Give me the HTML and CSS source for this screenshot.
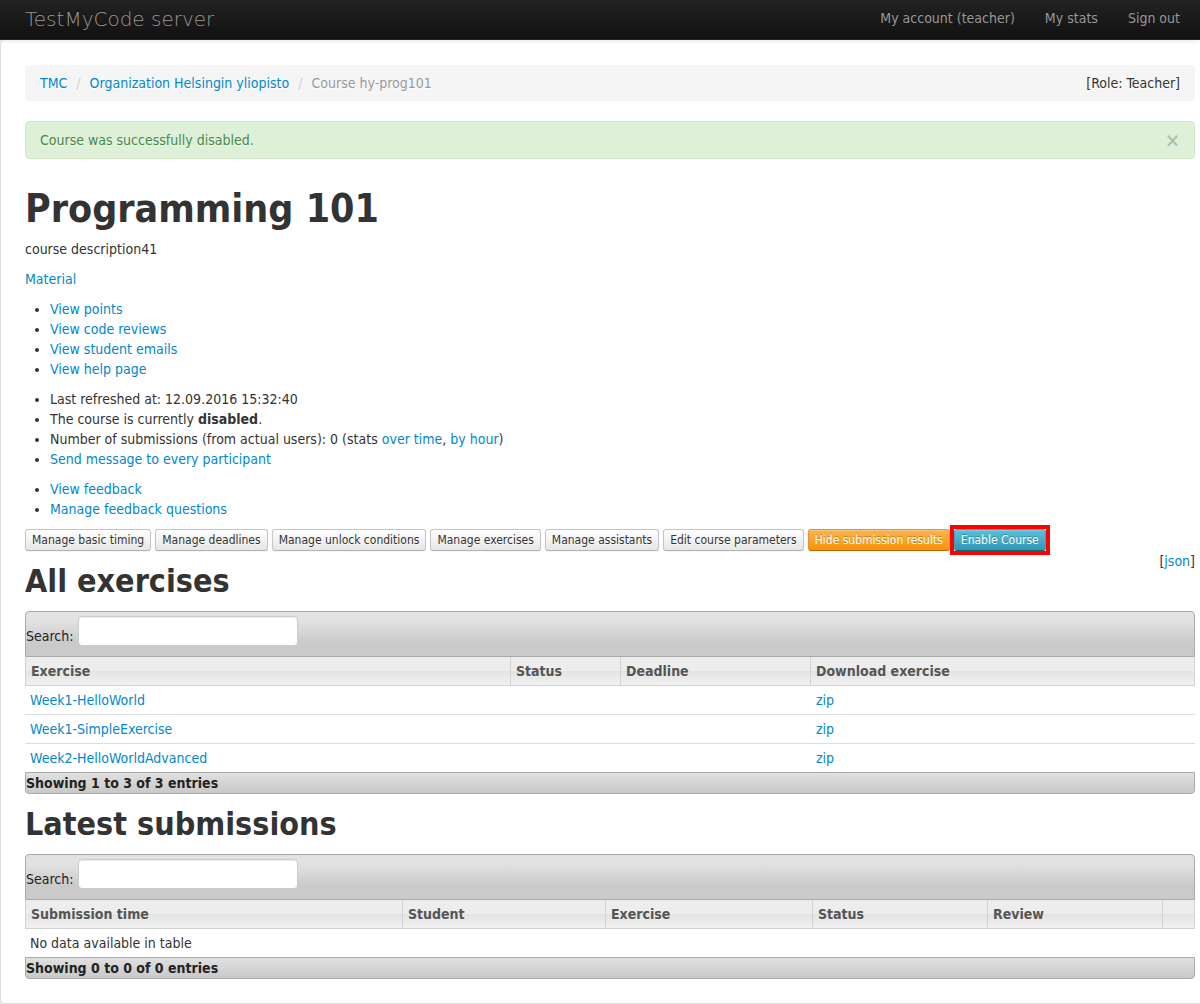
FILE: index.html
```html
<!DOCTYPE html>
<html lang="en">
<head>
<meta charset="utf-8">
<meta name="viewport" content="width=device-width, initial-scale=1">
<title>Programming 101 - TestMyCode server</title>
<link rel="stylesheet" href="styles.css">
</head>
<body>
<header class="navbar">
  <a class="brand" href="#">TestMyCode server</a>
  <nav class="nav">
    <a href="#">My account (teacher)</a>
    <a href="#">My stats</a>
    <a href="#">Sign out</a>
  </nav>
</header>
<main class="page">
  <div class="breadcrumb">
    <ol class="crumbs">
      <li><a href="#">TMC</a></li>
      <li><a href="#">Organization Helsingin yliopisto</a></li>
      <li class="current">Course hy-prog101</li>
    </ol>
    <span class="role">[Role: Teacher]</span>
  </div>
  <div class="alert" role="status">
    <span>Course was successfully disabled.</span>
    <button class="close" type="button" aria-label="Close">×</button>
  </div>

  <h1>Programming 101</h1>
  <p>course description41</p>
  <p><a href="#">Material</a></p>
  <ul>
    <li><a href="#">View points</a></li>
    <li><a href="#">View code reviews</a></li>
    <li><a href="#">View student emails</a></li>
    <li><a href="#">View help page</a></li>
  </ul>
  <ul>
    <li>Last refreshed at: 12.09.2016 15:32:40</li>
    <li>The course is currently <strong>disabled</strong>.</li>
    <li>Number of submissions (from actual users): 0 (stats <a href="#">over time</a>, <a href="#">by hour</a>)</li>
    <li><a href="#">Send message to every participant</a></li>
  </ul>
  <ul>
    <li><a href="#">View feedback</a></li>
    <li><a href="#">Manage feedback questions</a></li>
  </ul>

  <div class="actions">
    <button class="btn" type="button">Manage basic timing</button>
    <button class="btn" type="button">Manage deadlines</button>
    <button class="btn" type="button">Manage unlock conditions</button>
    <button class="btn" type="button">Manage exercises</button>
    <button class="btn" type="button">Manage assistants</button>
    <button class="btn" type="button">Edit course parameters</button>
    <button class="btn btn-warning" type="button">Hide submission results</button>
    <span class="highlight"><button class="btn btn-info" type="button">Enable Course</button></span>
  </div>

  <section>
    <div class="section-head">
      <h2>All exercises</h2>
      <span class="json">[<a href="#">json</a>]</span>
    </div>
    <div class="toolbar">
      <label for="exercise-search">Search:</label>
      <input id="exercise-search" type="text">
    </div>
    <table>
      <colgroup><col><col class="ex-status"><col class="ex-deadline"><col class="ex-download"></colgroup>
      <thead>
        <tr><th>Exercise</th><th>Status</th><th>Deadline</th><th>Download exercise</th></tr>
      </thead>
      <tbody>
        <tr><td><a href="#">Week1-HelloWorld</a></td><td></td><td></td><td><a href="#">zip</a></td></tr>
        <tr><td><a href="#">Week1-SimpleExercise</a></td><td></td><td></td><td><a href="#">zip</a></td></tr>
        <tr><td><a href="#">Week2-HelloWorldAdvanced</a></td><td></td><td></td><td><a href="#">zip</a></td></tr>
      </tbody>
    </table>
    <div class="table-info">Showing 1 to 3 of 3 entries</div>
  </section>

  <section>
    <div class="section-head">
      <h2>Latest submissions</h2>
    </div>
    <div class="toolbar">
      <label for="submission-search">Search:</label>
      <input id="submission-search" type="text">
    </div>
    <table>
      <colgroup><col><col class="sub-student"><col class="sub-exercise"><col class="sub-status"><col class="sub-review"><col class="sub-link"></colgroup>
      <thead>
        <tr><th>Submission time</th><th>Student</th><th>Exercise</th><th>Status</th><th>Review</th><th></th></tr>
      </thead>
      <tbody>
        <tr><td colspan="6">No data available in table</td></tr>
      </tbody>
    </table>
    <div class="table-info">Showing 0 to 0 of 0 entries</div>
  </section>
</main>
</body>
</html>
```
FILE: styles.css
```css
* { box-sizing: border-box; }

body {
  margin: 0;
  background: #eee;
  color: #333;
  font: 14px/20px "DejaVu Sans Condensed", "DejaVu Sans", sans-serif;
}

a { color: #08c; text-decoration: none; }
a:hover { text-decoration: underline; }

.navbar {
  display: flex;
  justify-content: space-between;
  padding: 0 5px 0 25px;
  background: linear-gradient(#222, #111);
  border-bottom: 1px solid #252525;
  box-shadow: 0 1px 4px rgba(0, 0, 0, .1);
  position: relative;
}
.navbar a { color: #999; text-shadow: 0 -1px 0 rgba(0, 0, 0, .25); }
.brand {
  padding: 9px 0 10px;
  font-family: "DejaVu Sans", sans-serif;
  font-size: 20px;
  font-weight: 200;
}
.nav { display: flex; }
.nav a { padding: 8px 15px; }

.page {
  padding: 25px 5px 24px 24px;
  background: #fff;
  border: solid #ddd;
  border-width: 0 0 1px 1px;
  border-radius: 5px 0 0 5px;
}

.breadcrumb, .alert {
  display: flex;
  justify-content: space-between;
  margin-bottom: 20px;
  border-radius: 4px;
}
.breadcrumb {
  padding: 8px 15px;
  background: #f5f5f5;
  text-shadow: 0 1px 0 #fff;
}
.crumbs { display: flex; margin: 0; padding: 0; list-style: none; }
.crumbs li + li::before { content: "/"; padding: 0 9px; color: #ccc; }
.crumbs .current { color: #999; }

.alert {
  padding: 8px 14px;
  background: #dff0d8;
  border: 1px solid #d6e9c6;
  color: #468847;
  text-shadow: 0 1px 0 rgba(255, 255, 255, .5);
}
.close {
  padding: 0;
  border: 0;
  background: none;
  color: #000;
  font: bold 20px/20px "DejaVu Sans Condensed", "DejaVu Sans", sans-serif;
  text-shadow: 0 1px 0 #fff;
  opacity: .2;
}

h1, h2 { line-height: 40px; margin: 10px 0; }
h1 { margin-top: 30px; font-size: 39px; }
h2 { font-size: 32px; }
p { margin: 0 0 10px; }
ul { margin: 0 0 10px 25px; padding: 0; }

.actions { display: flex; flex-wrap: wrap; gap: 4px; }
.btn {
  height: 22px;
  padding: 0 6px;
  border: 1px solid #c5c5c5;
  border-bottom-color: #b3b3b3;
  border-radius: 3px;
  background: linear-gradient(#fff, #e6e6e6);
  box-shadow: inset 0 1px 0 rgba(255, 255, 255, .2), 0 1px 2px rgba(0, 0, 0, .05);
  color: #333;
  font: 12px/20px "DejaVu Sans Condensed", "DejaVu Sans", sans-serif;
  text-shadow: 0 1px 1px rgba(255, 255, 255, .75);
}
.btn-warning, .btn-info { color: #fff; text-shadow: 0 -1px 0 rgba(0, 0, 0, .25); }
.btn-warning { background: linear-gradient(#fbb450, #f89406); border-color: #e1943a #e1943a #ad6704; }
.btn-info { background: linear-gradient(#5bc0de, #2f96b4); border-color: #3d9fbc #3d9fbc #1f6377; }
.highlight { display: flex; outline: 4px solid #f00; }

.section-head { display: flex; justify-content: space-between; }

.toolbar {
  display: flex;
  align-items: flex-end;
  gap: 4px;
  padding: 4px 0 10px;
  border: 1px solid #aaa;
  border-radius: 4px 4px 0 0;
  background: linear-gradient(#e2e2e2 20%, #cacaca 70%);
  color: #222;
}
.toolbar input {
  width: 220px;
  height: 30px;
  padding: 4px 6px;
  border: 1px solid #ccc;
  border-radius: 4px;
  background: #fff;
  box-shadow: inset 0 1px 1px rgba(0, 0, 0, .075);
  font: inherit;
}

table { width: 100%; table-layout: fixed; border-spacing: 0; }
th, td { padding: 4px 5px; text-align: left; }
th {
  border: solid #d3d3d3;
  border-width: 0 1px 1px 0;
  background: linear-gradient(#ededed 49%, #e4e4e4 51%, #f1f1f1);
  color: #555;
}
th:first-child { border-left-width: 1px; }
td { border-bottom: 1px solid #ddd; }
tr:last-child td { border-bottom: 0; }

.ex-status { width: 110px; }
.ex-deadline { width: 190px; }
.ex-download { width: 384px; }
.sub-student { width: 203px; }
.sub-exercise { width: 207px; }
.sub-status, .sub-review { width: 175px; }
.sub-link { width: 32px; }

.table-info {
  border: 1px solid #aaa;
  border-radius: 0 0 4px 4px;
  background: linear-gradient(#e0e0e0, #c9c9c9);
  color: #222;
  font-weight: bold;
}
```
